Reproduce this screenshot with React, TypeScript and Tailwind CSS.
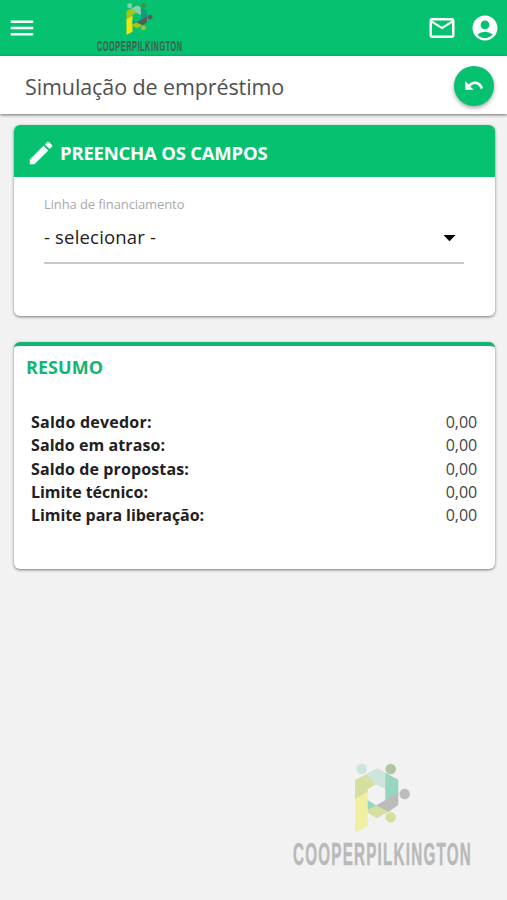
import React from 'react';
import { MdAccountCircle, MdArrowDropDown, MdEdit, MdMailOutline, MdMenu } from 'react-icons/md';

interface LogoPalette {
  mint: string;
  lime: string;
  yellow: string;
  teal: string;
  grey: string;
  olive: string;
  text: string;
}

const headerPalette: LogoPalette = {
  mint: '#8bcfaa',
  lime: '#a3c61c',
  yellow: '#f0e60a',
  teal: '#119c7c',
  grey: '#4f5f57',
  olive: '#45903b',
  text: '#3a6450',
};

const watermarkPalette: LogoPalette = {
  mint: '#cee5db',
  lime: '#d3e09f',
  yellow: '#eff0a0',
  teal: '#98d5c1',
  grey: '#bcbcbc',
  olive: '#b0c6a3',
  text: '#b9b9b9',
};

const LogoMark: React.FC<{ palette: LogoPalette; className: string }> = ({ palette, className }) => (
  <svg viewBox="0 0 57 70" preserveAspectRatio="none" className={className}>
    <path d="M1 17.3 L13 10.8 L22 21.3 L13.7 26.3 V30 L1 37Z" fill={palette.lime} />
    <path d="M1 36 L13.7 28.5 V62.7 L1 69.3Z" fill={palette.yellow} />
    <path d="M12 11.3 L23.3 5.3 L32 10 V26.6 L22 21.3Z" fill={palette.mint} />
    <path d="M31.3 9.8 L44.3 16.7 V30.5 L31.3 38Z" fill={palette.teal} />
    <path d="M13.7 37 L22.7 42.7 L18 47.5 L13.7 46.5Z" fill={palette.teal} />
    <path d="M44.3 29.5 V42 L34.5 49 L21.5 42.7Z" fill={palette.grey} />
    <path d="M13.7 46.5 L22 42.7 L35 48.5 L22.7 55.3 L13.7 49.5Z" fill={palette.lime} />
    <circle cx="7.7" cy="6" r="5.3" fill={palette.mint} />
    <circle cx="36.7" cy="6" r="5.3" fill={palette.olive} />
    <circle cx="50.7" cy="31" r="5.2" fill={palette.grey} />
    <circle cx="36.7" cy="54.3" r="5.2" fill={palette.lime} />
  </svg>
);

const Wordmark: React.FC<{ palette: LogoPalette; className: string }> = ({ palette, className }) => (
  <svg viewBox="0 0 184 32" preserveAspectRatio="none" className={className}>
    <text
      x="0"
      y="26"
      textLength="179"
      lengthAdjust="spacingAndGlyphs"
      letterSpacing="2.5"
      fontSize="31"
      fontWeight="700"
      fontFamily="Liberation Sans Narrow, Liberation Sans, sans-serif"
      fill={palette.text}
      stroke={palette.text}
      strokeWidth="0.5"
    >
      COOPERPILKINGTON
    </text>
  </svg>
);

const summary = [
  { label: 'Saldo devedor:', value: '0,00', tracking: 'tracking-[0.23px]' },
  { label: 'Saldo em atraso:', value: '0,00', tracking: 'tracking-[0.08px]' },
  { label: 'Saldo de propostas:', value: '0,00', tracking: 'tracking-[0.12px]' },
  { label: 'Limite técnico:', value: '0,00', tracking: 'tracking-[-0.06px]' },
  { label: 'Limite para liberação:', value: '0,00', tracking: 'tracking-[-0.07px]' },
];

const App: React.FC = () => {
  return (
    <div className="flex h-[900px] w-full flex-col overflow-hidden bg-[#f2f2f2] font-['Open_Sans','Noto_Sans',sans-serif] text-[#212121]">
      {/* Top bar */}
      <header className="flex h-14 shrink-0 items-center bg-[#06c270] pl-[7px] pr-[7px] text-white">
        <button aria-label="Menu">
          <MdMenu className="h-[30px] w-[30px]" />
        </button>
        <div className="ml-[60px] flex h-full w-[88px] flex-col items-start pt-[3px]">
          <LogoMark palette={headerPalette} className="ml-[29px] h-8 w-[27px] shrink-0" />
          <Wordmark palette={headerPalette} className="mt-[4px] h-[15px] w-[88px] shrink-0 overflow-visible" />
        </div>
        <div className="ml-auto flex items-center gap-[13px]">
          <MdMailOutline className="h-[30px] w-[30px]" />
          <MdAccountCircle className="h-[30px] w-[30px]" />
        </div>
      </header>

      {/* Page title */}
      <div className="z-10 flex h-[58px] shrink-0 items-center justify-between bg-white pl-[25px] pr-[13px] pb-0.5 shadow-[0_1px_3px_rgba(0,0,0,0.55)]">
        <h1 className="pt-1.5 text-[21.5px] tracking-[-0.1px] text-[#505050]">Simulação de empréstimo</h1>
        <button
          aria-label="Voltar"
          className="mt-1 flex h-10 w-10 items-center justify-center rounded-full bg-[#06c270] text-white shadow-[0_2px_4px_rgba(0,0,0,0.35)]"
        >
          <svg viewBox="0 0 20 12" className="mb-0.5 h-[11px] w-5" fill="none">
            <path d="M0.5 1 V10.5 H9.5Z" fill="currentColor" />
            <path d="M4.5 6.5 C9 1.2 15.8 1.8 18.7 9.2" stroke="currentColor" strokeWidth="2.9" />
          </svg>
        </button>
      </div>

      {/* Form */}
      <section className="ml-[14px] mr-3 mt-[11px] h-[191px] shrink-0 overflow-hidden rounded-md bg-white shadow-[0_1px_3px_rgba(0,0,0,0.5)]">
        <div className="flex h-[52px] items-center bg-[#06c270] pl-3 pt-1 text-white">
          <MdEdit className="h-[30px] w-[30px]" />
          <h2 className="ml-1 text-[18.5px] font-bold tracking-[-0.22px]">PREENCHA OS CAMPOS</h2>
        </div>
        <div className="pl-[30px] pr-[31px] pt-[17px]">
          <label className="block text-[13px] leading-5 tracking-[-0.1px] text-[#aaa]">Linha de financiamento</label>
          <div className="mt-[5px] flex h-[45px] items-center justify-between border-b-2 border-[#c8c8c8] pb-2">
            <span className="text-[18.5px] tracking-[0.18px]">- selecionar -</span>
            <MdArrowDropDown className="mt-0.5 h-[29px] w-[29px] text-black" />
          </div>
        </div>
      </section>

      {/* Summary */}
      <section className="ml-[14px] mr-3 mt-[26px] h-[227px] shrink-0 rounded-md border-t-4 border-[#14b574] bg-white shadow-[0_1px_3px_rgba(0,0,0,0.5)]">
        <h2 className="pl-[12px] pt-[7px] text-[18px] leading-7 font-bold tracking-[0.05px] text-[#14b574]">RESUMO</h2>
        <dl className="pl-[17px] pr-[18px] pt-[29.6px]">
          {summary.map((row) => (
            <div key={row.label} className="flex h-[23.2px] items-center justify-between text-[16px]">
              <dt className={`font-bold ${row.tracking}`}>{row.label}</dt>
              <dd className="tracking-[-0.1px] text-[#444]">{row.value}</dd>
            </div>
          ))}
        </dl>
      </section>

      {/* Watermark */}
      <footer className="mt-auto mr-[30px] mb-[29px] flex w-[184px] flex-col self-end">
        <LogoMark palette={watermarkPalette} className="ml-[61px] h-[70px] w-[57px]" />
        <Wordmark palette={watermarkPalette} className="mt-1.5 h-8 w-[184px] overflow-visible" />
      </footer>
    </div>
  );
};

export default App;
